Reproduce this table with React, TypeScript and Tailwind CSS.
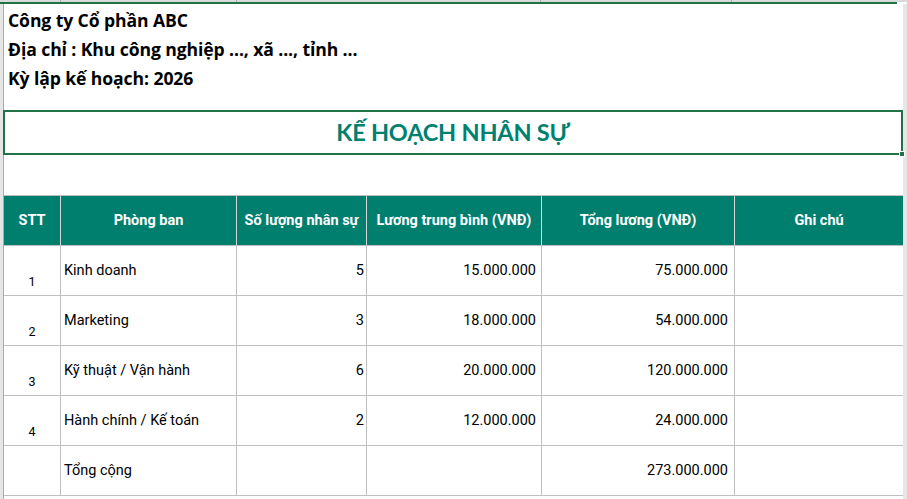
import React from 'react';

type Row = { stt: string; name: string; qty: string; avg: string; total: string };

const rows: Row[] = [
  { stt: '1', name: 'Kinh doanh', qty: '5', avg: '15.000.000', total: '75.000.000' },
  { stt: '2', name: 'Marketing', qty: '3', avg: '18.000.000', total: '54.000.000' },
  { stt: '3', name: 'Kỹ thuật / Vận hành', qty: '6', avg: '20.000.000', total: '120.000.000' },
  { stt: '4', name: 'Hành chính / Kế toán', qty: '2', avg: '12.000.000', total: '24.000.000' },
];

const cols = 'grid grid-cols-[57px_176px_130px_175px_193px_168px]';
const cell = 'border-r border-[#c0c0c0] h-full flex';

export default function App() {
  return (
    <div className="w-[907px] h-[499px] bg-white overflow-hidden flex flex-col font-['Roboto',sans-serif] text-black">
      {/* column header remnant + selection line */}
      <div className="h-[2px] bg-[#dadada] flex">
        <div className="w-[61px] border-r border-[#ababab]" />
        <div className="w-[176px] border-r border-[#ababab]" />
        <div className="w-[304px] border-r border-[#ababab]" />
        <div className="w-[191px] border-r border-[#ababab]" />
      </div>
      <div className="h-[2px] bg-[#217346] mr-[10px]" />

      <div className="flex flex-1">
        <div className="w-[4px] bg-[#e6e6e6] border-r border-[#ababab]" />

        <div className="w-[899px] flex flex-col">
          <div className="pt-[2px] pl-[4px] font-['Open_Sans',sans-serif] font-bold text-[17.6px] tracking-[-0.1px]">
            <div className="h-[29px] flex items-center">Công ty Cổ phần ABC</div>
            <div className="h-[29px] flex items-center">Địa chỉ : Khu công nghiệp ..., xã ..., tỉnh ...</div>
            <div className="h-[29px] flex items-center">Kỳ lập kế hoạch: 2026</div>
          </div>

          <div className="h-[17px]" />

          <div className="relative -ml-px h-[45px] border-2 border-[#217346] flex items-center justify-center">
            <span className="font-['Lato',sans-serif] font-bold text-[23.5px] text-[#00806f] tracking-[-0.2px]">
              KẾ HOẠCH NHÂN SỰ
            </span>
            <div className="absolute -right-[4px] -bottom-[4px] w-[6px] h-[6px] bg-[#217346] border border-white" />
          </div>

          <div className="h-[40px]" />

          <div className="border-t border-[#c0c0c0]">
            <div className={`${cols} h-[50px] bg-[#007e6e] border-b border-[#c0c0c0] text-white font-bold text-[14.5px]`}>
              {['STT', 'Phòng ban', 'Số lượng nhân sự', 'Lương trung bình (VNĐ)', 'Tổng lương (VNĐ)', 'Ghi chú'].map((h, i) => (
                <div key={i} className={`${i < 5 ? 'border-r border-[#d6d6d6]' : ''} flex items-center justify-center whitespace-nowrap`}>
                  {h}
                </div>
              ))}
            </div>

            {rows.map((r) => (
              <div key={r.stt} className={`${cols} h-[50px] border-b border-[#c0c0c0] text-[14.5px]`}>
                <div className={`${cell} items-end justify-center pb-[3px] text-[12.5px]`}>{r.stt}</div>
                <div className={`${cell} items-center pl-[3px]`}>{r.name}</div>
                <div className={`${cell} items-center justify-end pr-[2px]`}>{r.qty}</div>
                <div className={`${cell} items-center justify-end pr-[5px]`}>{r.avg}</div>
                <div className={`${cell} items-center justify-end pr-[6px]`}>{r.total}</div>
                <div className="h-full" />
              </div>
            ))}

            <div className={`${cols} h-[50px] border-b border-[#c0c0c0] text-[14.5px]`}>
              <div className={cell} />
              <div className={`${cell} items-center pl-[3px]`}>Tổng cộng</div>
              <div className={cell} />
              <div className={cell} />
              <div className={`${cell} items-center justify-end pr-[6px]`}>273.000.000</div>
              <div className="h-full" />
            </div>
          </div>
        </div>

        <div className="w-[4px] bg-[#e6e6e6]" />
      </div>
    </div>
  );
}
